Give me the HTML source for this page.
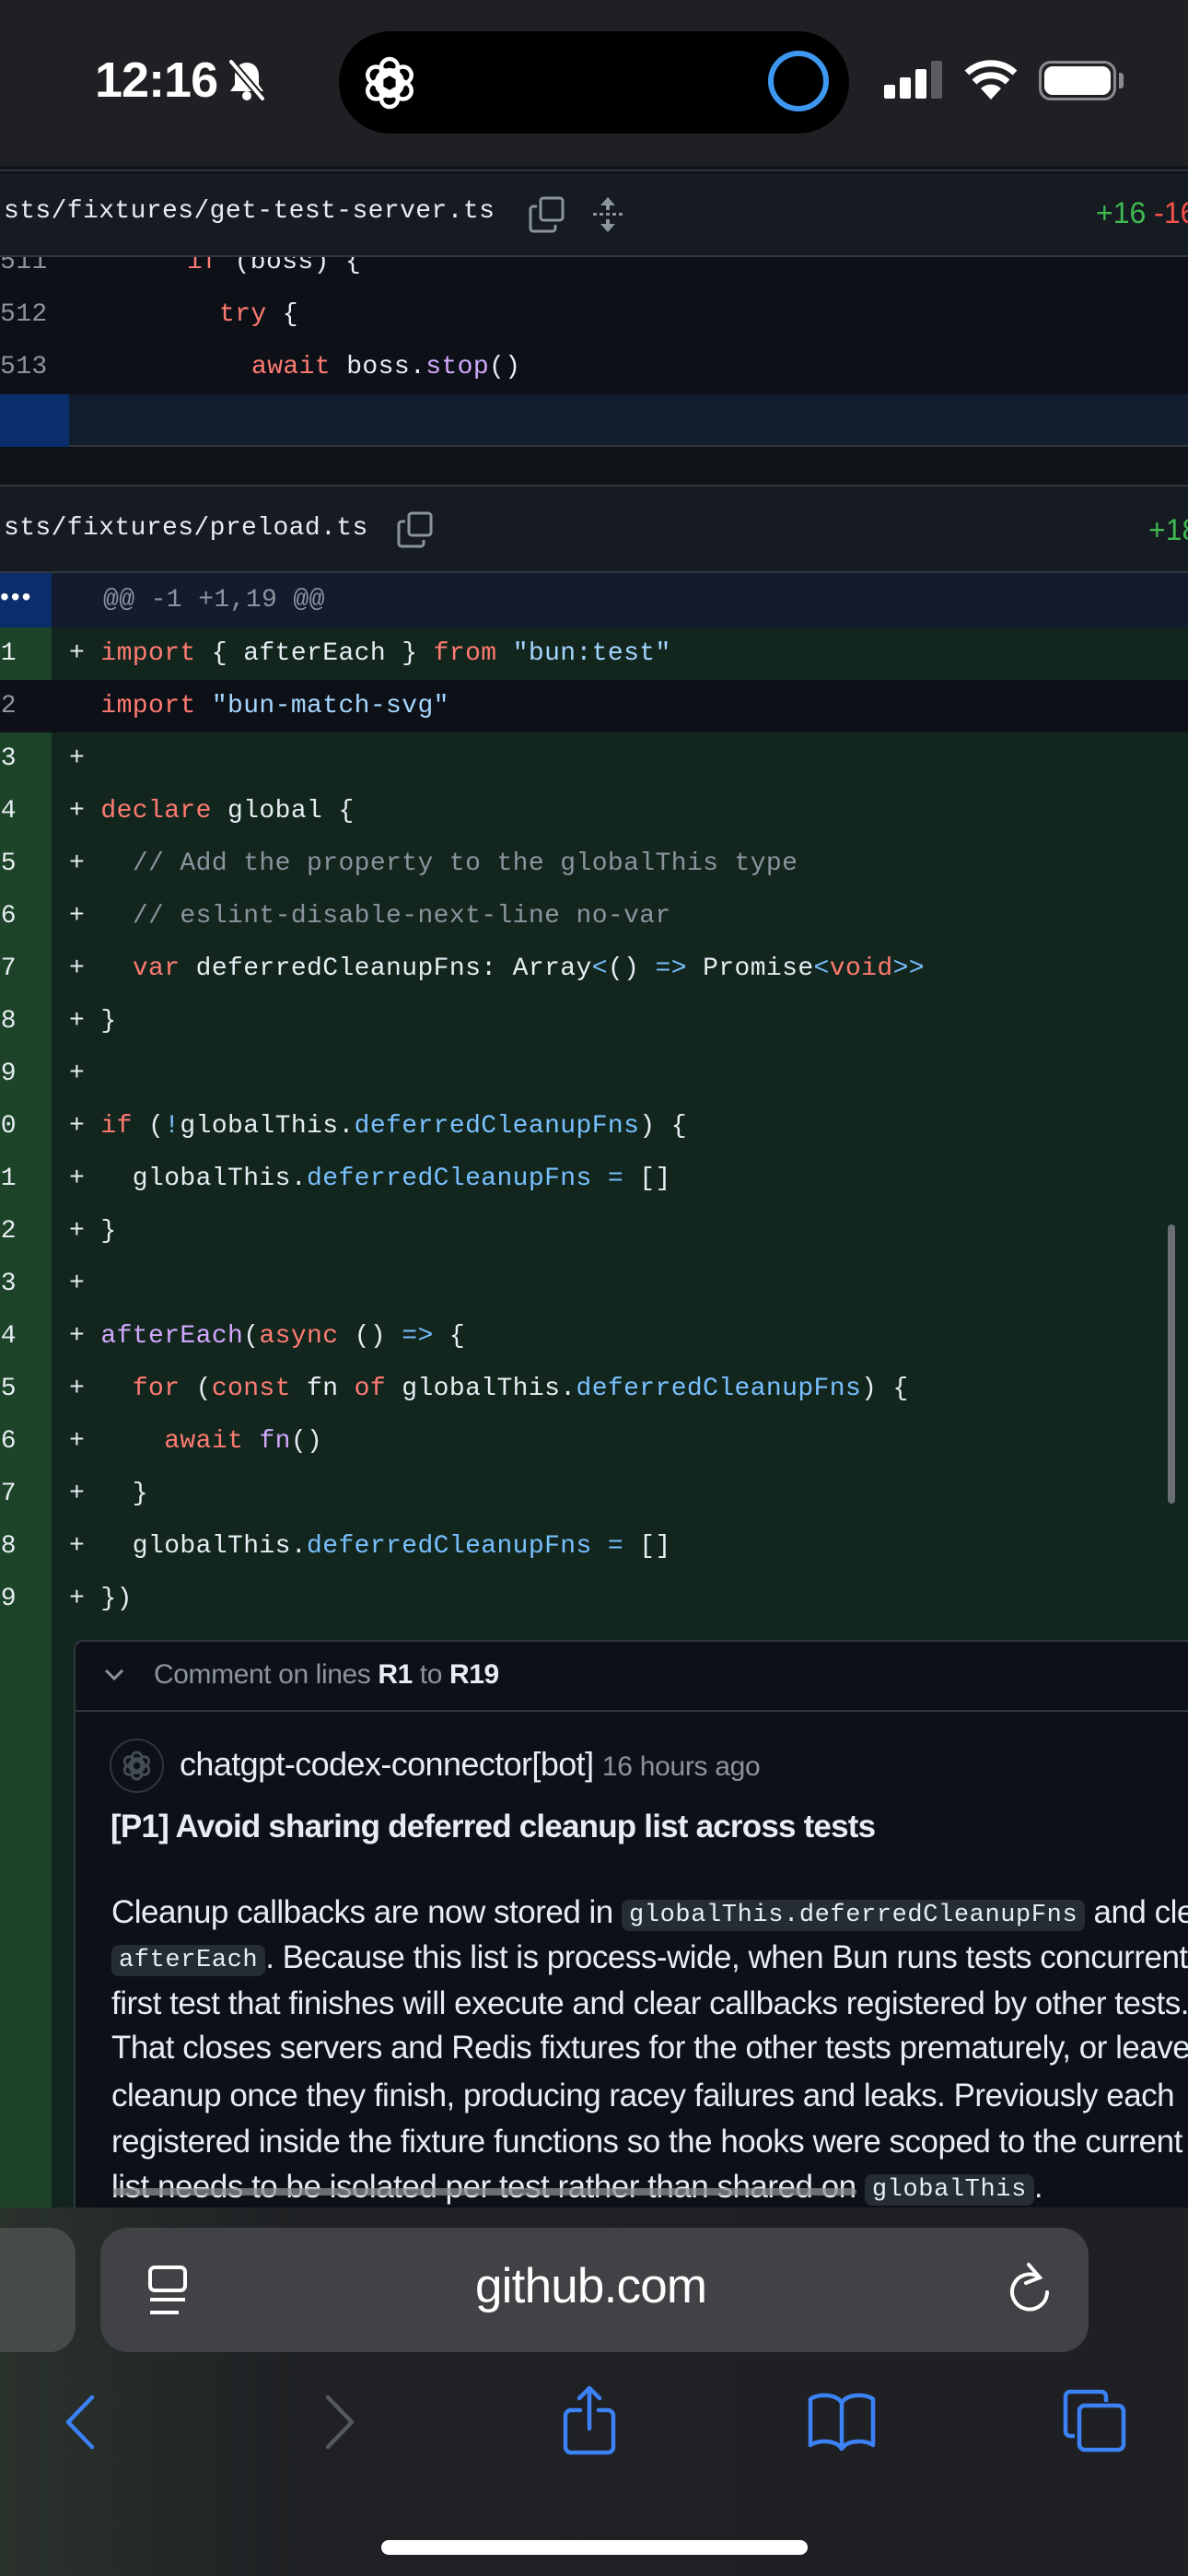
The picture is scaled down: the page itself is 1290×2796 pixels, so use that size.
<!DOCTYPE html>
<html><head><meta charset="utf-8">
<style>
*{margin:0;padding:0;box-sizing:border-box}
body{width:1290px;height:2796px;overflow:hidden;background:#0d1117;position:relative;font-family:"Liberation Sans",sans-serif;color:#e6edf3}
.abs{position:absolute}
.mono{font-family:"Liberation Mono",monospace;font-size:28px;letter-spacing:0.4px;white-space:pre}
.row{position:absolute;left:0;width:1290px;height:57px}
.row .num{position:absolute;top:0;height:57px;line-height:57px;text-align:right;color:#e6edf3}
.row .code{position:absolute;top:0;line-height:57px}
.k{color:#ff7b72}.s{color:#a5d6ff}.c{color:#8b949e}.f{color:#d2a8ff}.p{color:#79c0ff}
.add{background:#12261e}
.add .g{background:#1d4428}
.g{position:absolute;left:0;top:0;height:57px;width:56px}
.ic{position:absolute}
.ln{position:absolute;left:121px;white-space:nowrap;font-size:35px;letter-spacing:-0.5px;line-height:48px;color:#e6edf3}
.ic2{font-family:"Liberation Mono",monospace;font-size:27px;letter-spacing:0.6px;background:#262c36;border-radius:8px;padding:2px 8px;vertical-align:2px}
</style></head><body>

<!-- code section 1 -->
<div class="row" style="top:256px"><div class="num mono" style="left:0;width:48px;color:#8b949e">511</div><div class="code mono" style="left:203px"><span class="k">if</span> (boss) {</div></div>
<div class="row" style="top:313px"><div class="num mono" style="left:0;width:48px;color:#8b949e">512</div><div class="code mono" style="left:238px"><span class="k">try</span> {</div></div>
<div class="row" style="top:370px"><div class="num mono" style="left:0;width:48px;color:#8b949e">513</div><div class="code mono" style="left:273px"><span class="k">await</span> boss.<span class="f">stop</span>()</div></div>
<div class="row" style="top:428px;background:#121d2f;border-bottom:2px solid #30363d"><div class="abs" style="left:0;top:0;width:75px;height:57px;background:#0c2d6b"></div></div>

<!-- status bar -->
<div class="abs" style="left:0;top:0;width:1290px;height:180px;background:#1e2023"></div>
<div class="abs" style="left:0;top:180px;width:1290px;height:6px;background:#111418;border-bottom:2px solid #30363d"></div>
<div class="abs" style="left:103px;top:56px;font-size:54px;font-weight:bold;color:#fff;letter-spacing:-1px">12:16</div>
<svg class="ic" style="left:246px;top:64px" width="44" height="46" viewBox="0 0 44 46"><path d="M22 4c-8 0-13 6-13 14v10l-5 7h36l-5-7V18c0-8-5-14-13-14z" fill="#fff"/><circle cx="22" cy="40" r="5" fill="#fff"/><path d="M4 2l36 42" stroke="#1e2023" stroke-width="8"/><path d="M5 3l34 40" stroke="#fff" stroke-width="4" stroke-linecap="round"/></svg>
<div class="abs" style="left:368px;top:34px;width:554px;height:111px;background:#000;border-radius:56px"></div>
<svg class="ic" style="left:390px;top:57px" width="66" height="66" viewBox="-33 -33 66 66" fill="none" stroke="#fff" stroke-width="4.5"><g><rect x="-9" y="-26" width="18" height="40" rx="9"/><rect x="-9" y="-26" width="18" height="40" rx="9" transform="rotate(60)"/><rect x="-9" y="-26" width="18" height="40" rx="9" transform="rotate(120)"/><rect x="-9" y="-26" width="18" height="40" rx="9" transform="rotate(180)"/><rect x="-9" y="-26" width="18" height="40" rx="9" transform="rotate(240)"/><rect x="-9" y="-26" width="18" height="40" rx="9" transform="rotate(300)"/></g></svg>
<svg class="ic" style="left:832px;top:53px" width="70" height="70"><circle cx="35" cy="35" r="30" fill="none" stroke="#3e97f0" stroke-width="6"/></svg>
<div class="abs" style="left:960px;top:92px;width:12px;height:15px;background:#fff;border-radius:2px"></div>
<div class="abs" style="left:977px;top:84px;width:12px;height:23px;background:#fff;border-radius:2px"></div>
<div class="abs" style="left:994px;top:75px;width:12px;height:32px;background:#fff;border-radius:2px"></div>
<div class="abs" style="left:1011px;top:66px;width:12px;height:41px;background:#5a5c60;border-radius:2px"></div>
<svg class="ic" style="left:1046px;top:64px" width="60" height="46" viewBox="0 0 60 46"><path d="M30 44L19 32a16 16 0 0 1 22 0z" fill="#fff"/><path d="M12 25a26 26 0 0 1 36 0" stroke="#fff" stroke-width="7" fill="none"/><path d="M4 15a38 38 0 0 1 52 0" stroke="#fff" stroke-width="7" fill="none"/></svg>
<div class="abs" style="left:1128px;top:66px;width:84px;height:43px;border:3px solid #8a8b8e;border-radius:13px"></div>
<div class="abs" style="left:1134px;top:72px;width:72px;height:31px;background:#fff;border-radius:9px"></div>
<div class="abs" style="left:1215px;top:79px;width:5px;height:17px;background:#8a8b8e;border-radius:0 3px 3px 0"></div>

<!-- file header 1 -->
<div class="abs" style="left:0;top:188px;width:1290px;height:91px;background:#161b22;border-bottom:2px solid #30363d"></div>
<div class="abs mono" style="left:4px;top:214px;color:#e6edf3">sts/fixtures/get-test-server.ts</div>
<svg class="ic" style="left:573px;top:212px" width="42" height="42" viewBox="0 0 42 42" fill="none" stroke="#8b949e" stroke-width="3"><rect x="14" y="3" width="24" height="24" rx="3"/><path d="M10 12H6a3 3 0 0 0-3 3v21a3 3 0 0 0 3 3h21a3 3 0 0 0 3-3v-4"/></svg>
<svg class="ic" style="left:642px;top:213px" width="36" height="40" viewBox="0 0 36 40" fill="#8b949e"><path d="M18 1l8 9H10z"/><path d="M18 39l8-9H10z"/><rect x="16" y="9" width="4" height="6"/><rect x="16" y="25" width="4" height="6"/><g><rect x="2" y="18" width="4" height="3"/><rect x="9" y="18" width="4" height="3"/><rect x="16" y="18" width="4" height="3"/><rect x="23" y="18" width="4" height="3"/><rect x="30" y="18" width="4" height="3"/></g></svg>
<div class="abs" style="left:1190px;top:213px;font-size:32px;white-space:nowrap"><span style="color:#3fb950">+16</span> <span style="color:#f85149">-16</span></div>

<!-- gap -->
<div class="abs" style="left:0;top:487px;width:1290px;height:40px;background:#0f1216"></div>

<!-- file header 2 -->
<div class="abs" style="left:0;top:526px;width:1290px;height:96px;background:#161b22;border-top:2px solid #30363d;border-bottom:2px solid #30363d"></div>
<div class="abs mono" style="left:4px;top:558px">sts/fixtures/preload.ts</div>
<svg class="ic" style="left:430px;top:554px" width="42" height="42" viewBox="0 0 42 42" fill="none" stroke="#8b949e" stroke-width="3"><rect x="14" y="3" width="24" height="24" rx="3"/><path d="M10 12H6a3 3 0 0 0-3 3v21a3 3 0 0 0 3 3h21a3 3 0 0 0 3-3v-4"/></svg>
<div class="abs" style="left:1247px;top:557px;font-size:32px;color:#3fb950">+18</div>

<!-- hunk -->
<div class="row" style="top:622px;height:59px;background:#121c2e"><div class="abs" style="left:0;top:0;width:56px;height:59px;background:#0c2d6b"></div><div class="abs" style="left:0;top:10px;font-size:28px;color:#fff;letter-spacing:2px">•••</div><div class="code mono c" style="left:112px;line-height:59px">@@ -1 +1,19 @@</div></div>

<!-- added lines -->
<div class="row add" style="top:681px"><div class="g"></div><div class="num mono" style="left:0;width:18px">1</div><div class="code mono" style="left:75px">+ <span class="k">import</span> { afterEach } <span class="k">from</span> <span class="s">"bun:test"</span></div></div>
<div class="row" style="top:738px;background:#0d1117"><div class="num mono" style="left:0;width:18px;color:#8b949e">2</div><div class="code mono" style="left:75px">  <span class="k">import</span> <span class="s">"bun-match-svg"</span></div></div>
<div class="row add" style="top:795px"><div class="g"></div><div class="num mono" style="left:0;width:18px">3</div><div class="code mono" style="left:75px">+</div></div>
<div class="row add" style="top:852px"><div class="g"></div><div class="num mono" style="left:0;width:18px">4</div><div class="code mono" style="left:75px">+ <span class="k">declare</span> global {</div></div>
<div class="row add" style="top:909px"><div class="g"></div><div class="num mono" style="left:0;width:18px">5</div><div class="code mono" style="left:75px">+   <span class="c">// Add the property to the globalThis type</span></div></div>
<div class="row add" style="top:966px"><div class="g"></div><div class="num mono" style="left:0;width:18px">6</div><div class="code mono" style="left:75px">+   <span class="c">// eslint-disable-next-line no-var</span></div></div>
<div class="row add" style="top:1023px"><div class="g"></div><div class="num mono" style="left:0;width:18px">7</div><div class="code mono" style="left:75px">+   <span class="k">var</span> deferredCleanupFns: Array<span class="p">&lt;</span>() <span class="p">=&gt;</span> Promise<span class="p">&lt;</span><span class="k">void</span><span class="p">&gt;&gt;</span></div></div>
<div class="row add" style="top:1080px"><div class="g"></div><div class="num mono" style="left:0;width:18px">8</div><div class="code mono" style="left:75px">+ }</div></div>
<div class="row add" style="top:1137px"><div class="g"></div><div class="num mono" style="left:0;width:18px">9</div><div class="code mono" style="left:75px">+</div></div>
<div class="row add" style="top:1194px"><div class="g"></div><div class="num mono" style="left:-17px;width:35px">10</div><div class="code mono" style="left:75px">+ <span class="k">if</span> (<span class="p">!</span>globalThis.<span class="p">deferredCleanupFns</span>) {</div></div>
<div class="row add" style="top:1251px"><div class="g"></div><div class="num mono" style="left:-17px;width:35px">11</div><div class="code mono" style="left:75px">+   globalThis.<span class="p">deferredCleanupFns</span> <span class="p">=</span> []</div></div>
<div class="row add" style="top:1308px"><div class="g"></div><div class="num mono" style="left:-17px;width:35px">12</div><div class="code mono" style="left:75px">+ }</div></div>
<div class="row add" style="top:1365px"><div class="g"></div><div class="num mono" style="left:-17px;width:35px">13</div><div class="code mono" style="left:75px">+</div></div>
<div class="row add" style="top:1422px"><div class="g"></div><div class="num mono" style="left:-17px;width:35px">14</div><div class="code mono" style="left:75px">+ <span class="f">afterEach</span>(<span class="k">async</span> () <span class="p">=&gt;</span> {</div></div>
<div class="row add" style="top:1479px"><div class="g"></div><div class="num mono" style="left:-17px;width:35px">15</div><div class="code mono" style="left:75px">+   <span class="k">for</span> (<span class="k">const</span> fn <span class="k">of</span> globalThis.<span class="p">deferredCleanupFns</span>) {</div></div>
<div class="row add" style="top:1536px"><div class="g"></div><div class="num mono" style="left:-17px;width:35px">16</div><div class="code mono" style="left:75px">+     <span class="k">await</span> <span class="f">fn</span>()</div></div>
<div class="row add" style="top:1593px"><div class="g"></div><div class="num mono" style="left:-17px;width:35px">17</div><div class="code mono" style="left:75px">+   }</div></div>
<div class="row add" style="top:1650px"><div class="g"></div><div class="num mono" style="left:-17px;width:35px">18</div><div class="code mono" style="left:75px">+   globalThis.<span class="p">deferredCleanupFns</span> <span class="p">=</span> []</div></div>
<div class="row add" style="top:1707px"><div class="g"></div><div class="num mono" style="left:-17px;width:35px">19</div><div class="code mono" style="left:75px">+ })</div></div>
<div class="row add" style="top:1764px;height:640px"><div class="g" style="height:640px"></div></div>

<div class="abs" style="left:1268px;top:1329px;width:8px;height:303px;background:#6b6f74;border-radius:4px"></div>

<!-- comment box -->
<div class="abs" style="left:80px;top:1780px;width:1240px;height:640px;background:#0d1117;border:2px solid #30363d;border-radius:10px"></div>
<div class="abs" style="left:82px;top:1856px;width:1210px;height:2px;background:#30363d"></div>
<svg class="ic" style="left:112px;top:1808px" width="24" height="20" viewBox="0 0 24 20"><path d="M3 5l9 9 9-9" stroke="#8b949e" stroke-width="3" fill="none"/></svg>
<div class="abs" style="left:167px;top:1801px;font-size:30px;color:#8b949e;white-space:nowrap;letter-spacing:-0.4px">Comment on lines <b style="color:#e6edf3">R1</b> to <b style="color:#e6edf3">R19</b></div>
<div class="abs" style="left:119px;top:1887px;width:59px;height:59px;border-radius:50%;border:2px solid #30363d;background:#0d1117"></div>
<svg class="ic" style="left:130px;top:1898px" width="37" height="37" viewBox="-33 -33 66 66" fill="none" stroke="#444c56" stroke-width="5"><rect x="-9" y="-26" width="18" height="40" rx="9"/><rect x="-9" y="-26" width="18" height="40" rx="9" transform="rotate(60)"/><rect x="-9" y="-26" width="18" height="40" rx="9" transform="rotate(120)"/><rect x="-9" y="-26" width="18" height="40" rx="9" transform="rotate(180)"/><rect x="-9" y="-26" width="18" height="40" rx="9" transform="rotate(240)"/><rect x="-9" y="-26" width="18" height="40" rx="9" transform="rotate(300)"/></svg>
<div class="abs" style="left:195px;top:1894px;font-size:36px;white-space:nowrap;letter-spacing:-0.6px">chatgpt-codex-connector[bot] <span style="font-size:30px;color:#8b949e;letter-spacing:-0.3px">16 hours ago</span></div>
<div class="abs" style="left:120px;top:1963px;font-size:35px;font-weight:bold;white-space:nowrap;letter-spacing:-0.8px">[P1] Avoid sharing deferred cleanup list across tests</div>

<div class="ln" style="top:2052px">Cleanup callbacks are now stored in <span class="ic2">globalThis.deferredCleanupFns</span> and cleared in</div>
<div class="ln" style="top:2101px"><span class="ic2">afterEach</span>. Because this list is process-wide, when Bun runs tests concurrently, the</div>
<div class="ln" style="top:2151px">first test that finishes will execute and clear callbacks registered by other tests.</div>
<div class="ln" style="top:2199px">That closes servers and Redis fixtures for the other tests prematurely, or leaves</div>
<div class="ln" style="top:2251px">cleanup once they finish, producing racey failures and leaks. Previously each</div>
<div class="ln" style="top:2301px">registered inside the fixture functions so the hooks were scoped to the current</div>
<div class="ln" style="top:2350px">list needs to be isolated per test rather than shared on <span class="ic2">globalThis</span>.</div>
<div class="abs" style="left:123px;top:2375px;width:807px;height:8px;background:rgba(140,140,145,0.75);border-radius:4px"></div>

<!-- safari bottom -->
<div class="abs" style="left:0;top:2396px;width:1290px;height:400px;background:linear-gradient(90deg,#2a322c 0%,#1f2124 25%,#1f2023 100%)"></div>
<div class="abs" style="left:-40px;top:2418px;width:122px;height:135px;background:#454c47;border-radius:28px"></div>
<div class="abs" style="left:109px;top:2418px;width:1073px;height:135px;background:#414245;border-radius:30px"></div>
<svg class="ic" style="left:160px;top:2458px" width="48" height="58" viewBox="0 0 48 58" fill="none" stroke="#fff" stroke-width="4"><rect x="3" y="3" width="38" height="25" rx="5"/><path d="M3 38h38M3 52h31"/></svg>
<div class="abs" style="left:516px;top:2451px;font-size:53px;color:#fff;letter-spacing:-0.8px">github.com</div>
<svg class="ic" style="left:1093px;top:2455px" width="50" height="58" viewBox="0 0 50 58" fill="none" stroke="#fff" stroke-width="4" stroke-linecap="round"><path d="M36 17A19 19 0 1 0 44 33"/><path d="M24 3l12 14-15 6"/></svg>

<svg class="ic" style="left:68px;top:2598px" width="38" height="62" viewBox="0 0 38 62"><path d="M32 4L6 31l26 27" stroke="#3b82f6" stroke-width="4.5" fill="none" stroke-linecap="round" stroke-linejoin="round"/></svg>
<svg class="ic" style="left:350px;top:2598px" width="38" height="62" viewBox="0 0 38 62"><path d="M6 4l26 27L6 58" stroke="#55585d" stroke-width="4.5" fill="none" stroke-linecap="round" stroke-linejoin="round"/></svg>
<svg class="ic" style="left:610px;top:2588px" width="60" height="78" viewBox="0 0 60 78" fill="none" stroke="#3b82f6" stroke-width="4.5" stroke-linecap="round" stroke-linejoin="round"><path d="M20 28H10a6 6 0 0 0-6 6v34a6 6 0 0 0 6 6h40a6 6 0 0 0 6-6V34a6 6 0 0 0-6-6H40"/><path d="M30 48V4M19 15L30 4l11 11"/></svg>
<svg class="ic" style="left:876px;top:2596px" width="76" height="64" viewBox="0 0 76 64" fill="none" stroke="#3b82f6" stroke-width="4.5" stroke-linejoin="round"><path d="M38 12C32 2 12 2 4 8v50c8-6 28-6 34 4 6-10 26-10 34-4V8C64 2 44 2 38 12z"/><path d="M38 12v50"/></svg>
<svg class="ic" style="left:1153px;top:2592px" width="72" height="72" viewBox="0 0 72 72" fill="none" stroke="#3b82f6" stroke-width="4.5"><path d="M14 52H9a5 5 0 0 1-5-5V9a5 5 0 0 1 5-5h34a5 5 0 0 1 5 5v6"/><rect x="19" y="19" width="48" height="48" rx="6"/></svg>
<div class="abs" style="left:414px;top:2757px;width:463px;height:16px;background:#fff;border-radius:8px"></div>
</body></html>
